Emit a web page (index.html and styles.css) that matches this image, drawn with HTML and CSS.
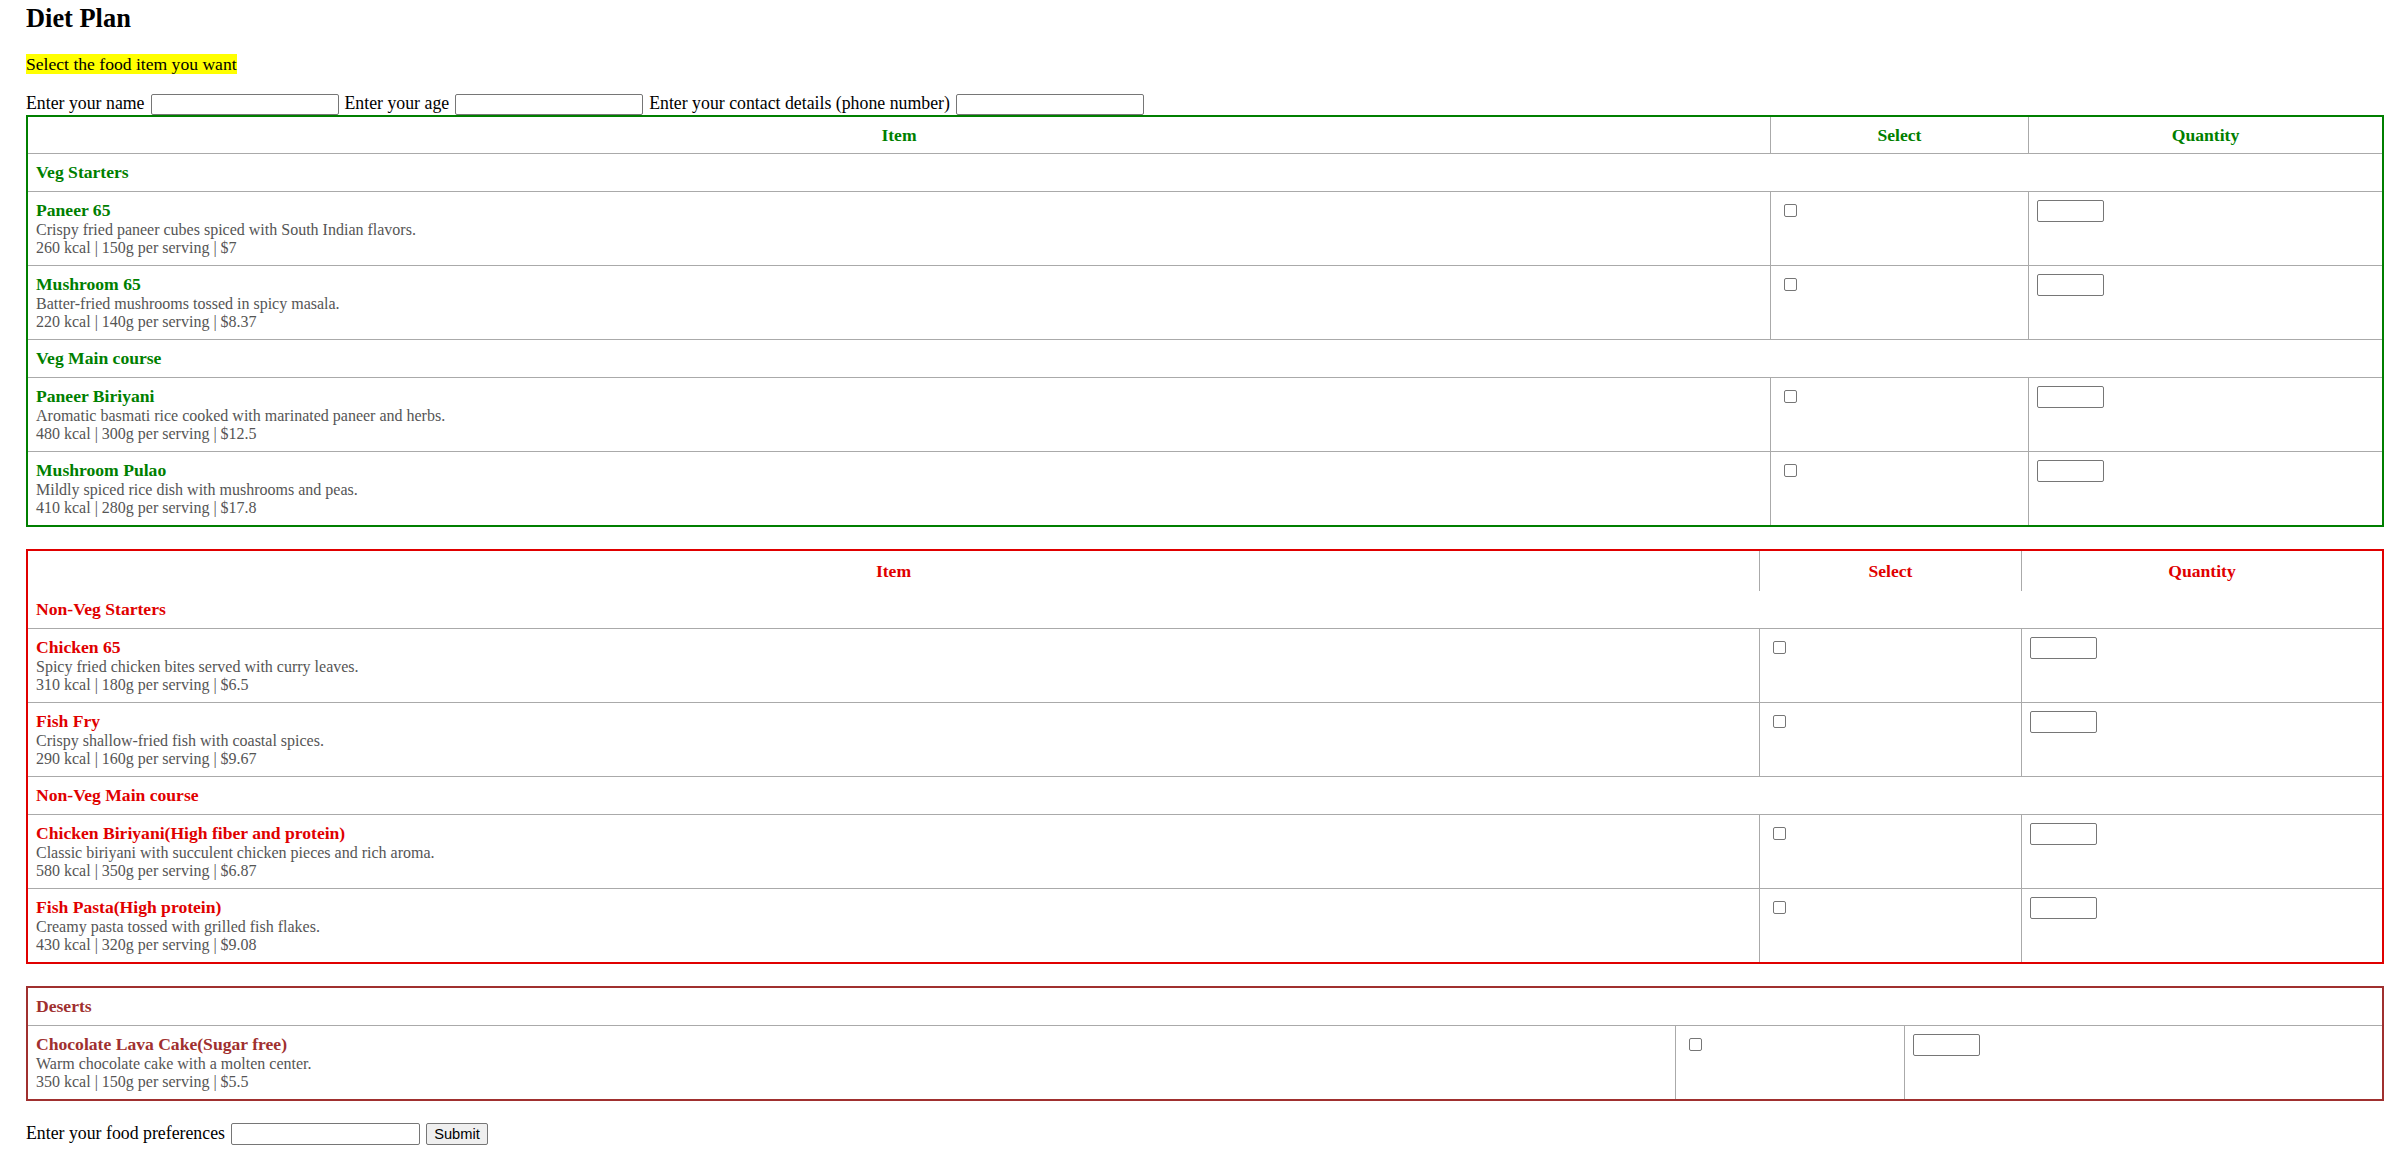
FILE: index.html
```html
<!DOCTYPE html>
<html lang="en">
<head>
<meta charset="utf-8">
<title>Diet Plan</title>
<link rel="stylesheet" href="styles.css">
</head>
<body>
<h2 class="title">Diet Plan</h2>
<p class="hint"><span class="hl">Select the food item you want</span></p>
<div class="info">
  <span>Enter your name</span><input type="text" class="field">
  <span>Enter your age</span><input type="text" class="field">
  <span>Enter your contact details (phone number)</span><input type="text" class="field">
</div>

<table class="menu veg">
  <colgroup><col class="c-item"><col class="c-sel"><col class="c-qty"></colgroup>
  <thead>
    <tr><th>Item</th><th>Select</th><th>Quantity</th></tr>
  </thead>
  <tbody>
    <tr class="cat"><td colspan="3">Veg Starters</td></tr>
    <tr>
      <td><div class="name">Paneer 65</div><div class="desc">Crispy fried paneer cubes spiced with South Indian flavors.<br>260 kcal | 150g per serving | $7</div></td>
      <td><input type="checkbox" class="chk"></td>
      <td><input type="text" class="qty"></td>
    </tr>
    <tr>
      <td><div class="name">Mushroom 65</div><div class="desc">Batter-fried mushrooms tossed in spicy masala.<br>220 kcal | 140g per serving | $8.37</div></td>
      <td><input type="checkbox" class="chk"></td>
      <td><input type="text" class="qty"></td>
    </tr>
    <tr class="cat"><td colspan="3">Veg Main course</td></tr>
    <tr>
      <td><div class="name">Paneer Biriyani</div><div class="desc">Aromatic basmati rice cooked with marinated paneer and herbs.<br>480 kcal | 300g per serving | $12.5</div></td>
      <td><input type="checkbox" class="chk"></td>
      <td><input type="text" class="qty"></td>
    </tr>
    <tr>
      <td><div class="name">Mushroom Pulao</div><div class="desc">Mildly spiced rice dish with mushrooms and peas.<br>410 kcal | 280g per serving | $17.8</div></td>
      <td><input type="checkbox" class="chk"></td>
      <td><input type="text" class="qty"></td>
    </tr>
  </tbody>
</table>

<table class="menu nonveg">
  <colgroup><col class="c-item"><col class="c-sel"><col class="c-qty"></colgroup>
  <thead>
    <tr><th>Item</th><th>Select</th><th>Quantity</th></tr>
  </thead>
  <tbody>
    <tr class="cat"><td colspan="3">Non-Veg Starters</td></tr>
    <tr>
      <td><div class="name">Chicken 65</div><div class="desc">Spicy fried chicken bites served with curry leaves.<br>310 kcal | 180g per serving | $6.5</div></td>
      <td><input type="checkbox" class="chk"></td>
      <td><input type="text" class="qty"></td>
    </tr>
    <tr>
      <td><div class="name">Fish Fry</div><div class="desc">Crispy shallow-fried fish with coastal spices.<br>290 kcal | 160g per serving | $9.67</div></td>
      <td><input type="checkbox" class="chk"></td>
      <td><input type="text" class="qty"></td>
    </tr>
    <tr class="cat"><td colspan="3">Non-Veg Main course</td></tr>
    <tr>
      <td><div class="name">Chicken Biriyani(High fiber and protein)</div><div class="desc">Classic biriyani with succulent chicken pieces and rich aroma.<br>580 kcal | 350g per serving | $6.87</div></td>
      <td><input type="checkbox" class="chk"></td>
      <td><input type="text" class="qty"></td>
    </tr>
    <tr>
      <td><div class="name">Fish Pasta(High protein)</div><div class="desc">Creamy pasta tossed with grilled fish flakes.<br>430 kcal | 320g per serving | $9.08</div></td>
      <td><input type="checkbox" class="chk"></td>
      <td><input type="text" class="qty"></td>
    </tr>
  </tbody>
</table>

<table class="menu dessert">
  <colgroup><col class="c-item"><col class="c-sel"><col class="c-qty"></colgroup>
  <tbody>
    <tr class="cat"><td colspan="3">Deserts</td></tr>
    <tr>
      <td><div class="name">Chocolate Lava Cake(Sugar free)</div><div class="desc">Warm chocolate cake with a molten center.<br>350 kcal | 150g per serving | $5.5</div></td>
      <td><input type="checkbox" class="chk"></td>
      <td><input type="text" class="qty"></td>
    </tr>
  </tbody>
</table>

<div class="prefs">
  <span>Enter your food preferences</span><input type="text" class="field pref"><button type="button" class="btn">Submit</button>
</div>
</body>
</html>
```

FILE: styles.css
```css
html, body {
  background: #ffffff;
}

body {
  margin: 0 0 0 26px;
  font-family: "Liberation Serif", "Times New Roman", serif;
  font-size: 17.6px;
  color: #000000;
}

.title {
  font-size: 26.4px;
  font-weight: bold;
  margin: 3px 0 20px;
}

.hint {
  margin: 0 0 18px;
}

.hl {
  background: #ffff00;
}

.info,
.prefs {
  display: flex;
  align-items: baseline;
  gap: 6px;
  font-size: 17.8px;
}

.prefs {
  margin-top: 22px;
}

.field {
  width: 188px;
  height: 21px;
  box-sizing: border-box;
  border: 1px solid #767676;
  border-radius: 2px;
  padding: 1px 2px;
  margin: 0;
  font-family: "Liberation Sans", Arial, sans-serif;
  font-size: 14.67px;
  background: #ffffff;
}

.field.pref {
  width: 189px;
  height: 22px;
}

.btn {
  width: 62px;
  height: 22px;
  box-sizing: border-box;
  border: 1px solid #767676;
  border-radius: 2px;
  background: #efefef;
  padding: 1px 6px;
  margin: 0;
  font-family: "Liberation Sans", Arial, sans-serif;
  font-size: 14.67px;
  color: #000000;
}

.menu {
  width: 100%;
  table-layout: fixed;
  border-collapse: separate;
  border-spacing: 0;
  border: 2px solid;
  margin: 0 0 22px;
}

.menu th,
.menu td {
  padding: 8px;
  border: 0;
  border-bottom: 1px solid #aaaaaa;
  text-align: left;
  vertical-align: top;
  font-weight: normal;
}

.menu th + th,
.menu td + td {
  border-left: 1px solid #aaaaaa;
}

.menu th {
  text-align: center;
  font-weight: bold;
  padding: 8px 8px 7px;
}

.menu tbody tr:last-child td {
  border-bottom: 0;
}

.menu .cat td {
  font-weight: bold;
}

.name {
  font-weight: bold;
}

.desc {
  font-size: 16px;
  color: #555555;
}

.chk {
  appearance: none;
  -webkit-appearance: none;
  display: block;
  width: 13px;
  height: 13px;
  box-sizing: border-box;
  border: 1px solid #767676;
  border-radius: 2px;
  background: #ffffff;
  margin: 4px 0 0 5px;
}

.qty {
  display: block;
  width: 67px;
  height: 22px;
  box-sizing: border-box;
  border: 1px solid #767676;
  border-radius: 2px;
  padding: 1px 2px;
  margin: 0;
  font-family: "Liberation Sans", Arial, sans-serif;
  font-size: 14.67px;
  background: #ffffff;
}

/* Veg table */
.veg {
  border-color: #007f00;
  color: #007f00;
}
.veg .c-sel { width: 258px; }
.veg .c-qty { width: 354px; }

/* Non-veg table */
.nonveg {
  border-color: #e00000;
  color: #e00000;
}
.nonveg th {
  border-bottom: 0;
  padding: 10px 8px 9px;
}
.nonveg .c-sel { width: 262px; }
.nonveg .c-qty { width: 361px; }

/* Dessert table */
.dessert {
  border-color: #a0302f;
  color: #a0302f;
}
.dessert .c-sel { width: 229px; }
.dessert .c-qty { width: 478px; }
```
